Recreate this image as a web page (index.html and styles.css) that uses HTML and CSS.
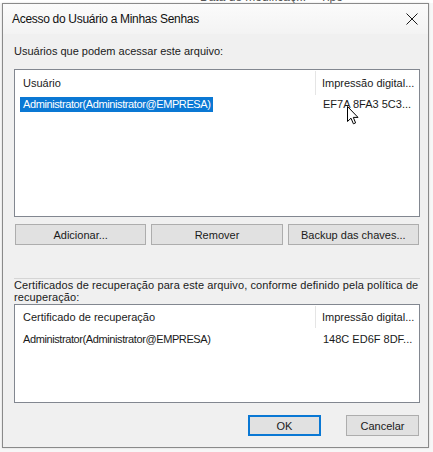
FILE: index.html
```html
<!DOCTYPE html>
<html>
<head>
    <link rel="stylesheet" href="styles.css">
</head>
<body>
    <div class="behind">
        <span class="behind-col first">Data de modificaç...</span>
        <span class="behind-col">Tipo</span>
    </div>

    <div class="dialog">
        <div class="titlebar">
            <span class="title">Acesso do Usuário a Minhas Senhas</span>
            <svg class="close" width="12" height="12" viewBox="0 0 12 12">
                <path d="M0.5 0.5 L11.5 11.5 M11.5 0.5 L0.5 11.5" stroke="#1a1a1a" stroke-width="1" fill="none"/>
            </svg>
        </div>

        <div class="content">
            <p class="label">Usuários que podem acessar este arquivo:</p>

            <div class="listview users">
                <div class="lv-header">
                    <div class="lv-col name">Usuário</div>
                    <div class="lv-col thumb">Impressão digital...</div>
                </div>
                <div class="lv-row">
                    <div class="lv-cell name"><span class="selected">Administrator(Administrator@EMPRESA)</span></div>
                    <div class="lv-cell thumb">EF7A 8FA3 5C3...</div>
                </div>
                <svg class="cursor" width="12" height="19" viewBox="0 0 12 19">
                    <path d="M0.5 0.5 L0.5 15.5 L4 12.2 L6.4 17.8 L8.6 16.9 L6.3 11.4 L11 11.4 Z" fill="#fff" stroke="#000" stroke-width="1" stroke-linejoin="miter"/>
                </svg>
            </div>

            <div class="actions">
                <button class="btn">Adicionar...</button>
                <button class="btn">Remover</button>
                <button class="btn">Backup das chaves...</button>
            </div>

            <hr class="separator">

            <p class="label wrap">Certificados de recuperação para este arquivo, conforme definido pela política de recuperação:</p>

            <div class="listview recovery">
                <div class="lv-header">
                    <div class="lv-col name">Certificado de recuperação</div>
                    <div class="lv-col thumb">Impressão digital...</div>
                </div>
                <div class="lv-row">
                    <div class="lv-cell name"><span>Administrator(Administrator@EMPRESA)</span></div>
                    <div class="lv-cell thumb">148C ED6F 8DF...</div>
                </div>
            </div>

            <div class="footer">
                <button class="btn default">OK</button>
                <button class="btn">Cancelar</button>
            </div>
        </div>
    </div>
</body>
</html>
```

FILE: styles.css
```css
:root {
    --face: #f0f0f0;
    --border: #828790;
    --text: #1a1a1a;
    --select: #0a78d4;
    --btn: #e1e1e1;
    --btn-border: #adadad;
}

* {
    margin: 0;
    padding: 0;
    box-sizing: border-box;
}

body {
    margin: 0;
    width: 433px;
    height: 452px;
    overflow: hidden;
    background: #f7f7f7;
    font-family: "Liberation Sans", Arial, sans-serif;
    font-size: 11px;
    color: var(--text);
}

/* window behind the dialog, only its header peeks out */
.behind {
    height: 3px;
    overflow: hidden;
    display: flex;
    background: #fff;
}

.behind-col {
    display: block;
    margin-top: -9px;
    line-height: 12px;
    color: #555;
    font-size: 12px;
}

.behind-col.first {
    margin-left: 200px;
    width: 120px;
}

.dialog {
    margin-left: 2px;
    width: 427px;
    height: 445px;
    border: 1px solid #8a8a8a;
    background: var(--face);
    display: flex;
    flex-direction: column;
    box-shadow: 0 0 2px rgba(0, 0, 0, 0.15);
}

.titlebar {
    height: 30px;
    display: flex;
    align-items: center;
    justify-content: space-between;
    padding: 0 9px 0 9px;
    background: linear-gradient(#fbfbfb, #f3f3f3);
}

.title {
    font-size: 12px;
    letter-spacing: -0.3px;
    color: #111;
}

.close {
    display: block;
    margin-right: 1px;
}

.content {
    flex: 1;
    display: flex;
    flex-direction: column;
    padding: 10px 8px 11px 11px;
}

.label {
    line-height: 15px;
}

.label.wrap {
    line-height: 12px;
    margin-top: 0;
    letter-spacing: 0.1px;
}

.listview {
    position: relative;
    background: #fff;
    border: 1px solid var(--border);
    padding: 1px 0 0 1px;
}

.listview.users {
    margin-top: 10px;
    height: 148px;
}

.listview.recovery {
    margin-top: 1px;
    height: 99px;
}

.lv-header {
    display: flex;
    height: 24px;
    align-items: stretch;
}

.recovery .lv-header {
    height: 22px;
}

.lv-col {
    display: flex;
    align-items: center;
    padding-left: 7px;
}

.lv-col.name {
    width: 300px;
    border-right: 1px solid #e5e5e5;
}

.lv-col.thumb {
    padding-left: 6px;
}

.lv-row {
    display: flex;
    height: 16px;
    margin-top: 1px;
    align-items: center;
}

.lv-cell.name {
    width: 301px;
    padding-left: 4px;
}

.lv-cell.name span {
    display: inline-block;
    line-height: 15px;
    padding: 0 3px 0 3px;
    letter-spacing: -0.4px;
}

.lv-cell .selected {
    background: var(--select);
    color: #fff;
}

.lv-cell.thumb {
    padding-left: 6px;
}

.recovery .lv-row {
    margin-top: 3px;
}

.cursor {
    position: absolute;
    left: 332px;
    top: 36px;
}

.actions {
    display: flex;
    gap: 5px;
    margin-top: 7px;
    padding-left: 1px;
    padding-right: 1px;
}

.btn {
    height: 21px;
    border: 1px solid var(--btn-border);
    background: var(--btn);
    font-family: inherit;
    font-size: 11px;
    color: var(--text);
}

.actions .btn {
    flex: 1;
}

.separator {
    margin-top: 33px;
    border: 0;
    border-top: 1px solid #d5d5d5;
    height: 0;
}

.footer {
    margin-top: auto;
    display: flex;
    justify-content: flex-end;
    gap: 25px;
    padding-right: 1px;
}

.footer .btn {
    width: 73px;
}

.footer .btn.default {
    border: 2px solid var(--select);
}
```
